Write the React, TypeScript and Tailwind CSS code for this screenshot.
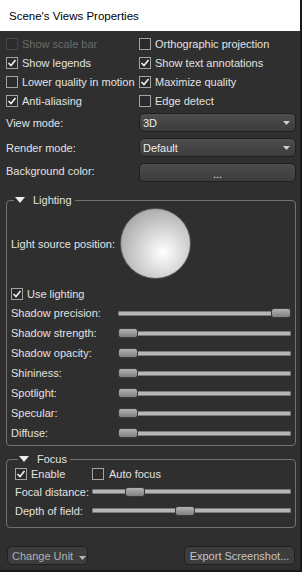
import React from 'react';

// small widgets used by the properties panel

function CheckMark() {
  return (
    <svg width="10" height="10" viewBox="0 0 10 10" className="block">
      <polyline points="1.5,5 4,7.5 8.5,2" fill="none" stroke="#f0f0f0" strokeWidth="1.6" />
    </svg>
  );
}

function Check({
  label,
  checked = false,
  disabled = false,
  gap = 'gap-[4px]',
  className = ''
}: {
  label: string;
  checked?: boolean;
  disabled?: boolean;
  gap?: string;
  className?: string;
}) {
  return (
    <div className={`flex items-center ${gap} ${className}`}>
      <span
        className={`w-[12px] h-[12px] shrink-0 flex items-center justify-center border bg-[#2b2b2b] ${
          disabled ? 'border-[#474747]' : 'border-[#a3a3a3]'
        }`}
      >
        {checked && <CheckMark />}
      </span>
      <span className={`whitespace-nowrap ${disabled ? 'text-[#6c6c6c]' : ''}`}>{label}</span>
    </div>
  );
}

function DownArrow({ color = '#d0d0d0' }: { color?: string }) {
  return (
    <svg width="7" height="4" viewBox="0 0 7 4" className="block shrink-0">
      <polygon points="0,0 7,0 3.5,4" fill={color} />
    </svg>
  );
}

function Combo({ value }: { value: string }) {
  return (
    <div className="h-[19px] flex items-center justify-between pl-[3px] pr-[5px] rounded-[5px] border border-[#1f1f1f] bg-gradient-to-b from-[#4d4d4d] to-[#3c3c3c] text-[#ececec]">
      <span>{value}</span>
      <DownArrow />
    </div>
  );
}

function Slider({ value }: { value: number }) {
  return (
    <div className="relative flex-1 h-[12px] flex items-center">
      <div className="w-full h-[5px] rounded-[1px] border border-[#7a7a7a] bg-[#b7b7b7]" />
      <div
        className="absolute top-[1px] w-[20px] h-[10px] rounded-[3px] border border-[#3a3a3a] bg-gradient-to-b from-[#b3b3b3] to-[#808080]"
        style={{ left: `calc((100% - 20px) * ${value})` }}
      />
    </div>
  );
}

function Legend({ title }: { title: string }) {
  return (
    <legend className="ml-[3px] pl-[1px] pr-[3px]">
      <span className="flex items-center h-[16px]">
        <svg width="10" height="6" viewBox="0 0 10 6" className="block">
          <polygon points="0,0 10,0 5,6" fill="#ececec" />
        </svg>
        <span className="ml-[8px]">{title}</span>
      </span>
    </legend>
  );
}

const lightingSliders = [
  { label: 'Shadow precision:', value: 1 },
  { label: 'Shadow strength:', value: 0 },
  { label: 'Shadow opacity:', value: 0 },
  { label: 'Shininess:', value: 0 },
  { label: 'Spotlight:', value: 0 },
  { label: 'Specular:', value: 0 },
  { label: 'Diffuse:', value: 0 }
];

export default function App() {
  return (
    <div className="w-[302px] h-[572px] flex flex-col bg-[#2f2f2f] border-r-2 border-b-2 border-[#1a1a1a] text-[11px] leading-[16px] text-[#e2e2e2] font-['Liberation_Sans',Arial,sans-serif] whitespace-nowrap overflow-hidden">
      {/* Title bar */}
      <div className="h-[31px] shrink-0 flex items-center pl-[9px] bg-white text-black text-[11.5px]">
        Scene's Views Properties
      </div>

      <div className="flex-1 flex flex-col pl-[6px] pr-[4px] pt-[3px]">
        {/* Display options */}
        <div className="grid grid-cols-[133px_1fr] auto-rows-[19px] items-center">
          <Check label="Show scale bar" disabled />
          <Check label="Orthographic projection" />
          <Check label="Show legends" checked />
          <Check label="Show text annotations" checked />
          <Check label="Lower quality in motion" />
          <Check label="Maximize quality" checked />
          <Check label="Anti-aliasing" checked />
          <Check label="Edge detect" />
        </div>

        {/* Modes */}
        <div className="mt-[3px] grid grid-cols-[133px_1fr] gap-y-[6px] items-center">
          <span>View mode:</span>
          <Combo value="3D" />
          <span>Render mode:</span>
          <Combo value="Default" />
          <span className="self-start">Background color:</span>
          <div className="h-[19px] flex items-end justify-center pb-[1px] rounded-[5px] border border-[#1f1f1f] bg-gradient-to-b from-[#4d4d4d] to-[#3c3c3c] text-[#ececec] leading-[12px]">
            ...
          </div>
        </div>

        {/* Lighting */}
        <fieldset className="mt-[10px] border border-[#727272] rounded-[4px] px-[4px] pb-[2px]">
          <Legend title="Lighting" />
          <div className="flex items-center">
            <span className="w-[109px]">Light source position:</span>
            <div className="w-[71px] h-[71px] rounded-full border border-[#5a5a5a] bg-[radial-gradient(circle_at_61%_63%,#ffffff_0%,#e4e4e4_25%,#bdbdbd_60%,#8f8f8f_100%)]" />
          </div>
          <Check label="Use lighting" checked className="mt-[6px] h-[18px]" />
          {lightingSliders.map((s) => (
            <div key={s.label} className="h-[20px] flex items-center">
              <span className="w-[107px] shrink-0">{s.label}</span>
              <Slider value={s.value} />
            </div>
          ))}
        </fieldset>

        {/* Focus */}
        <fieldset className="mt-[5px] border border-[#727272] rounded-[4px] pl-[8px] pr-[4px] pb-[7px]">
          <Legend title="Focus" />
          <div className="h-[13px] flex items-center">
            <Check label="Enable" checked className="w-[77px]" />
            <Check label="Auto focus" gap="gap-[5px]" />
          </div>
          <div className="mt-[2px] h-[19px] flex items-center">
            <span className="w-[77px] shrink-0">Focal distance:</span>
            <Slider value={0.185} />
          </div>
          <div className="h-[19px] flex items-center">
            <span className="w-[77px] shrink-0">Depth of field:</span>
            <Slider value={0.465} />
          </div>
        </fieldset>

        {/* Footer buttons */}
        <div className="mt-auto mb-[5px] flex items-center justify-between">
          <button className="ml-[1px] w-[81px] h-[19px] flex items-center gap-[6px] pl-[4px] rounded-[5px] border border-[#202020] bg-[#3d3d3d] text-[#b0b0b0]">
            <span>Change Unit</span>
            <span className="mt-[5px]">
              <DownArrow color="#b8b8b8" />
            </span>
          </button>
          <button className="mr-[1px] w-[111px] h-[19px] flex items-center justify-center rounded-[5px] border border-[#202020] bg-[#3d3d3d] text-[#c4c4c4]">
            Export Screenshot...
          </button>
        </div>
      </div>
    </div>
  );
}
